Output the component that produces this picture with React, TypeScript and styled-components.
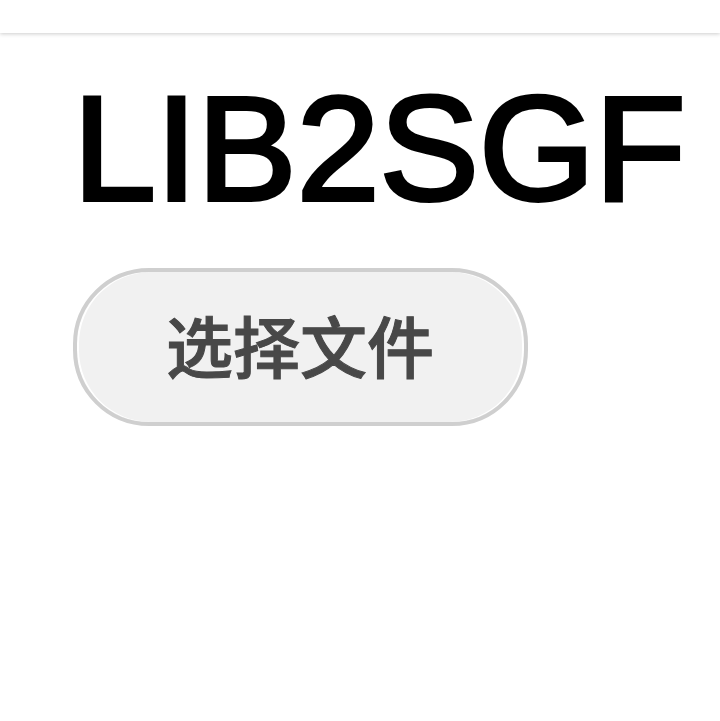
import React, { useRef } from "react";
import styled, { createGlobalStyle } from "styled-components";

const GlobalStyle = createGlobalStyle`
  *, *::before, *::after { box-sizing: border-box; }
  body {
    margin: 0;
    background: #ffffff;
    color: #000000;
    font-family: "Liberation Sans", "Noto Sans CJK SC", sans-serif;
  }
`;

const TopBar = styled.header`
  height: 33px;
  background: #ffffff;
  box-shadow: 0 1px 4px rgba(0, 0, 0, 0.2);
`;

const Content = styled.main`
  padding: 36px 24px 32px 73px;
`;

const Title = styled.h1`
  margin: 0;
  font-size: 149px;
  font-weight: 400;
  line-height: 160px;
  -webkit-text-stroke: 4px #000000;
`;

const PickButton = styled.button`
  display: block;
  margin-top: 39px;
  padding: 24px 90px 30px 89px;
  border: 4px solid #cfcfcf;
  border-radius: 76px;
  background: #f1f1f1;
  box-shadow: inset 2px 0 0 #ffffff, inset -2px 0 0 #ffffff;
  color: #484848;
  font-family: "Noto Sans CJK SC", sans-serif;
  font-size: 67px;
  font-weight: 500;
  line-height: 96px;
  -webkit-text-stroke: 1px #484848;
  white-space: nowrap;
  cursor: pointer;
`;

export default function App() {
  const fileInput = useRef<HTMLInputElement>(null);
  return (
    <>
      <GlobalStyle />
      <TopBar />
      <Content>
        <Title>LIB2SGF</Title>
        <PickButton type="button" onClick={() => fileInput.current?.click()}>
          选择文件
        </PickButton>
        <input ref={fileInput} type="file" aria-label="选择文件" hidden />
      </Content>
    </>
  );
}
